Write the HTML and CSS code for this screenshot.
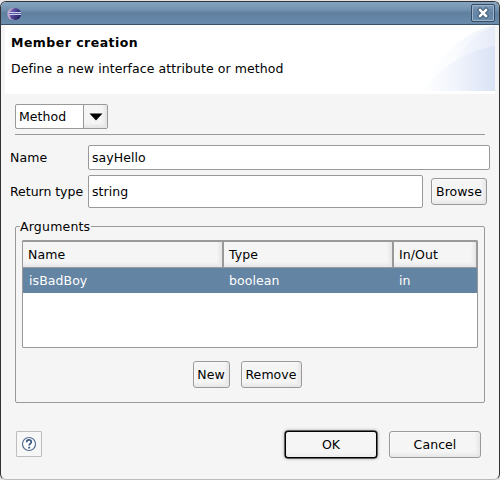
FILE: index.html
```
<!DOCTYPE html>
<html lang="en">
<head>
<meta charset="utf-8">
<title>Member creation</title>
<link rel="stylesheet" href="styles.css">
</head>
<body>
<main class="window">
  <header class="titlebar">
    <svg class="logo" width="16" height="14" viewBox="0 0 16 14">
      <defs><linearGradient id="orb" x1="0" x2="1" y1="0" y2=".5"><stop offset="0" stop-color="#a897c8"/><stop offset=".45" stop-color="#51489a"/><stop offset="1" stop-color="#29235f"/></linearGradient></defs>
      <circle cx="6.3" cy="7" r="6" fill="#c5a5cb"/>
      <circle cx="8.2" cy="7" r="6" fill="url(#orb)"/>
      <path d="M2 5.5h12M2 7.500h12" stroke="#c9d0ee"/>
      <path d="M2 6.500h12" stroke="#5b5aa0"/>
    </svg>
    <button class="close" aria-label="Close">
      <svg width="12" height="12" viewBox="0 0 12 12"><path d="M3 3l6 6M9 3l-6 6" stroke="#33506d" stroke-width="4.200" stroke-linecap="square"/><path d="M3 3l6 6M9 3l-6 6" stroke="#fff" stroke-width="2.500" stroke-linecap="square"/></svg>
    </button>
  </header>
  <section class="banner">
    <div class="intro">
      <h1>Member creation</h1>
      <p>Define a new interface attribute or method</p>
    </div>
    <svg class="swoosh" width="75" height="66" viewBox="0 0 75 66">
      <defs>
        <linearGradient id="arc1"><stop offset="0" stop-color="#fff"/><stop offset=".4" stop-color="#fafcfe"/><stop offset="1" stop-color="#edf1fa"/></linearGradient>
        <linearGradient id="arc2"><stop offset="0" stop-color="#f6f8fd"/><stop offset="1" stop-color="#e5ebf8"/></linearGradient>
        <linearGradient id="arc3"><stop offset="0" stop-color="#fff"/><stop offset=".5" stop-color="#eff3fb"/><stop offset="1" stop-color="#dae2f5"/></linearGradient>
      </defs>
      <path d="M2 66C18 32 42 7 75 0V66z" fill="url(#arc1)"/>
      <path d="M37 34C45 18 58 7 75 1V66H37z" fill="url(#arc2)"/>
      <path d="M2 66C20 43 44 26 75 21V66z" fill="url(#arc3)"/>
    </svg>
  </section>
  <section class="content">
    <div class="combo"><span>Method</span><i class="drop"><svg width="14" height="8" viewBox="0 0 14 8"><path d="M0.500 0.500h13L7 7.500z"/></svg></i></div>
    <hr>
    <div class="form">
      <label>Name</label><div class="field wide">sayHello</div>
      <label class="tight">Return type</label><div class="field tall">string</div><button class="btn browse">Browse</button>
    </div>
    <section class="group">
      <h2>Arguments</h2>
      <div class="table">
        <div class="row head"><span>Name</span><span>Type</span><span>In/Out</span></div>
        <div class="row selected"><span>isBadBoy</span><span>boolean</span><span>in</span></div>
      </div>
      <div class="actions"><button class="btn new">New</button><button class="btn remove">Remove</button></div>
    </section>
  </section>
  <footer>
    <button class="help" aria-label="Help"><svg width="16" height="16" viewBox="0 0 16 16" fill="none"><circle cx="8" cy="8" r="6.500" fill="#fff" stroke="#526d91" stroke-width="1.200"/><path d="M5.700 6.200C5.700 3.200 10.400 3.300 10.300 6C10.200 7.600 8.200 7.600 8.200 9.600" stroke="#3d5a84" stroke-width="1.800"/><path d="M7.200 10.700h2v1.800h-2z" fill="#3d5a84"/></svg></button>
    <button class="btn ok">OK</button>
    <button class="btn cancel">Cancel</button>
  </footer>
</main>
</body>
</html>
```
FILE: styles.css
```
* { box-sizing: border-box; }
body { margin: 0; padding-top: 1px; background: #e4e4e8; font: 12.5px/16px "DejaVu Sans", sans-serif; letter-spacing: .07px; color: #000; overflow: hidden; }
button { font: inherit; letter-spacing: inherit; color: inherit; padding: 0; margin: 0; }
.window { width: 500px; height: 479px; background: #f5f5f5; border: 1px solid #333; border-bottom-color: #bbb; border-radius: 6px; overflow: hidden; display: flex; flex-direction: column; }
.titlebar { height: 23px; flex: none; display: flex; align-items: center; justify-content: space-between; padding: 0 4px 0 6px; background: linear-gradient(#86a5c2, #7392b0 35%, #6080a0 50%, #6b8bac); border-bottom: 1px solid #3d536b; }
.logo { display: block; position: relative; top: 1px; }
.close { width: 24px; height: 18px; display: flex; align-items: center; justify-content: center; background: linear-gradient(#7f9dbb, #6484a5 50%, #6b8bac); border: 1px solid #344c65; border-radius: 2px; box-shadow: inset 0 0 0 1px #9fb5ca; }
.banner { height: 69px; flex: none; margin: 0 4px; background: #fff; display: flex; justify-content: space-between; }
.intro { padding: 10px 0 0 6px; }
h1 { margin: 0; font-size: 12.5px; line-height: 16px; letter-spacing: .47px; }
p { margin: 10px 0 0; }
.swoosh { display: block; }
.content { padding: 10px 14px 0; }
.combo { width: 93px; height: 25px; display: flex; border: 1px solid #999; border-radius: 2px; background: #fff; overflow: hidden; }
.combo span { width: 67px; padding: 4px 0 0 3px; }
.drop { flex: 1; border-left: 1px solid #999; background: #f5f5f5; display: flex; align-items: center; justify-content: center; box-shadow: inset -3px -3px 3px #e6e6e6; }
hr { margin: 5px 0 0; border: 0; height: 1px; background: #999; }
.form { display: grid; grid-template-columns: 78px 335px 56px; grid-template-rows: 25px 33px; row-gap: 5px; margin: 10px -5px 0; align-items: center; }
.tight { letter-spacing: -.03px; }
.field { height: 25px; display: flex; align-items: center; padding-left: 3px; border: 1px solid #999; border-radius: 2px; background: #fff; }
.wide { grid-column: 2 / 4; width: 402px; }
.tall { height: 33px; }
.btn { height: 27px; border: 1px solid #999; border-radius: 3px; background: #f5f5f5; box-shadow: inset -3px -3px 3px #e8e8e8, inset 1px 1px 0 #fafafa; }
.browse { width: 56px; margin-left: 8px; }
.group { position: relative; height: 177px; margin-top: 18px; padding: 13px 6px 0; border: 1px solid #999; border-radius: 2px; }
h2 { position: absolute; top: -8px; left: 4px; margin: 0; padding: 0 1px 0 0; background: #f5f5f5; font-size: 12.5px; font-weight: normal; line-height: 16px; letter-spacing: .2px; }
.table { height: 108px; border: 1px solid #999; background: #fff; border-radius: 1px; }
.row { display: grid; grid-template-columns: 201px 170px 83px; }
.head { height: 27px; border-top: 1px solid #999; border-bottom: 1px solid #999; background: #f5f5f5; }
.head span { padding: 5px 0 0 5px; border-right: 2px solid #999; box-shadow: inset -3px -3px 3px #e8e8e8; }
.head span:last-child { border-right-width: 1px; }
.selected { height: 25px; color: #fff; background: #6384a3; }
.selected span { padding: 5px 0 0 5px; }
.selected span:first-child { padding-left: 6px; }
.actions { display: flex; justify-content: center; gap: 11px; margin: 13px 6px 0 0; }
.new { width: 37px; }
.remove { width: 61px; }
footer { display: flex; align-items: flex-start; padding: 28px 18px 0 15px; }
.help { width: 26px; height: 26px; display: flex; align-items: center; justify-content: center; border: 1px solid #bdbdbd; border-radius: 1px; background: #f7f7f7; }
.ok, .cancel { width: 92px; }
.ok { margin-left: auto; border-color: #000; box-shadow: 0 0 0 .5px #000, 0 0 3px 1px #aaa, inset 0 -3px 3px #eee; }
.cancel { margin-left: 12px; }
```
